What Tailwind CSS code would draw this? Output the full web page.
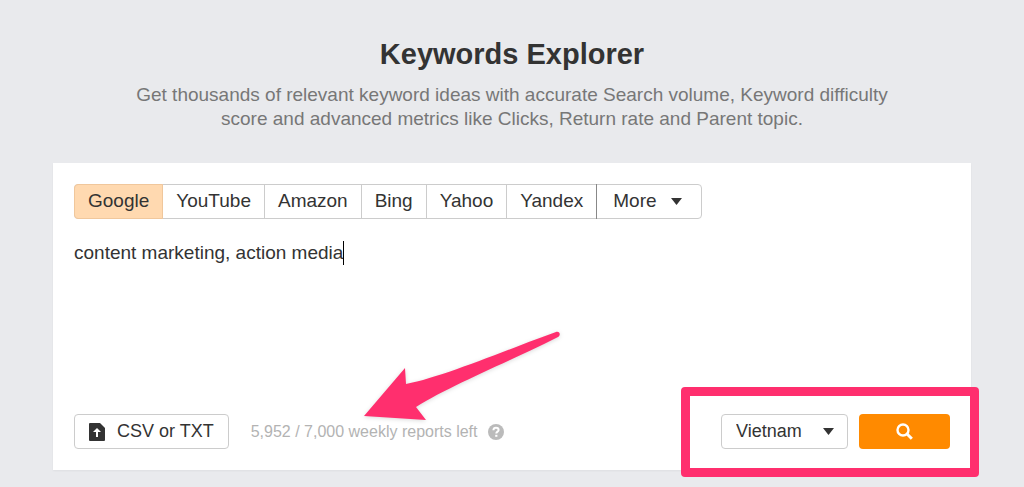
<!DOCTYPE html>
<html lang="en">

<head>
    <meta charset="UTF-8">
    <title>Keywords Explorer</title>
    <meta name="viewport" content="width=device-width, initial-scale=1.0">
    <script src="https://cdn.jsdelivr.net/npm/@tailwindcss/browser@4"></script>
</head>

<body class="min-h-screen overflow-x-hidden bg-[#e9eaed] px-4 font-['Liberation_Sans',Arial,sans-serif] text-[18px] text-[#333]">
    <main class="mx-auto max-w-[918px] pt-9 pb-4">
        <!-- Heading -->
        <header class="text-center">
            <h1 class="text-[29px] leading-9 font-bold">Keywords Explorer</h1>
            <p class="mx-auto mt-[11px] max-w-[760px] text-[19px] leading-6 text-[#777]">Get thousands of relevant keyword ideas with accurate Search volume, Keyword difficulty score and advanced metrics like Clicks, Return rate and Parent topic.</p>
        </header>

        <form class="relative mt-8 bg-white p-[21px] shadow-xs" onsubmit="return false">
            <!-- Search engines -->
            <div class="flex h-[35px] w-fit rounded border border-[#ccc] text-[19px]">
                <button type="button" class="-my-px -ml-px rounded-l border border-[#f0c79c] bg-[#ffd9b0] px-[13px]">Google</button>
                <button type="button" class="border-r border-[#ccc] px-[13px]">YouTube</button>
                <button type="button" class="border-r border-[#ccc] px-[13px]">Amazon</button>
                <button type="button" class="border-r border-[#ccc] px-[13px]">Bing</button>
                <button type="button" class="border-r border-[#ccc] px-[13px]">Yahoo</button>
                <button type="button" class="px-[13px]">Yandex</button>
                <button type="button" class="-my-px flex items-center gap-[14px] border-l border-[#888] pr-[19px] pl-4">More
                    <svg class="h-[7px] w-[11px]" viewBox="0 0 10 7" preserveAspectRatio="none" fill="#333" aria-hidden="true"><path d="M0 0h10L5 7z" /></svg>
                </button>
            </div>

            <!-- Keywords -->
            <div class="relative mt-[22px]">
                <textarea aria-label="Keywords" spellcheck="false" class="block h-[173px] w-full resize-none text-[19px] leading-6 outline-none">content marketing, action media</textarea>
                <div class="pointer-events-none absolute top-0 left-0 flex h-6 text-[19px] leading-6" aria-hidden="true">
                    <span class="invisible">content marketing, action media</span>
                    <span class="w-px bg-black"></span>
                </div>
            </div>

            <!-- Actions -->
            <div class="flex h-[35px] items-center">
                <button type="button" class="flex h-full items-center gap-3 rounded border border-[#ccc] px-[14px]">
                    <svg class="h-[18px] w-4" viewBox="0 0 16 18" aria-hidden="true">
                        <path fill="#333" d="M1 0h10l5 5v12a1 1 0 0 1-1 1H1a1 1 0 0 1-1-1V1a1 1 0 0 1 1-1z" />
                        <path fill="#fff" d="M8 5l4 4H9v5H7V9H4z" />
                    </svg>
                    CSV or TXT
                </button>
                <span class="ml-[22px] text-[16px] text-[#b3b3b3]">5,952 / 7,000 weekly reports left</span>
                <button type="button" aria-label="Help" class="ml-[10px]">
                    <svg class="size-4" viewBox="0 0 16 16" fill="none" aria-hidden="true">
                        <circle cx="8" cy="8" r="8" fill="#bbb" />
                        <path d="M5.4 6.2C5.5 4.6 6.6 3.8 8 3.8c1.500 0 2.600.8 2.600 2.100 0 1.700-2.300 1.700-2.300 3.600" stroke="#fff" stroke-width="2" />
                        <path d="M7.200 10.800h2.200v2H7.200z" fill="#fff" />
                    </svg>
                </button>

                <div class="relative ml-auto flex h-full gap-[11px]">
                    <div class="relative">
                        <select aria-label="Country" class="h-full w-[127px] appearance-none rounded border border-[#ccc] bg-white pl-[14px] outline-none">
                            <option>Vietnam</option>
                        </select>
                        <svg class="pointer-events-none absolute top-[14px] right-[14px] h-[7px] w-[11px]" viewBox="0 0 10 7" preserveAspectRatio="none" fill="#333" aria-hidden="true"><path d="M0 0h10L5 7z" /></svg>
                    </div>
                    <button type="submit" aria-label="Search" class="flex w-[91px] items-center justify-center rounded bg-[#ff8a00]">
                        <svg class="size-[17px]" viewBox="0 0 17 17" fill="none" stroke="#fff" aria-hidden="true">
                            <circle cx="7" cy="7" r="5.500" stroke-width="2.400" />
                            <path d="M10.800 10.800l5 5" stroke-width="3" />
                        </svg>
                    </button>
                    <div class="pointer-events-none absolute -top-[27px] -right-[29px] -bottom-[28px] -left-[40px] rounded border-[9px] border-[#ff2f6e]"></div>
                </div>
            </div>

            <!-- Arrow pointing at the remaining reports -->
            <svg class="pointer-events-none absolute top-[167px] left-[310px] h-[92px] w-[198px] drop-shadow-sm" viewBox="0 0 198 92" fill="#ff2f6e" aria-hidden="true">
                <path d="M1 86L42 38l1 16C80 47 140 21 193 2c4-1 5 3 2 5C150 30 88 55 53 77l10 13z" />
            </svg>
        </form>
    </main>
</body>

</html>
